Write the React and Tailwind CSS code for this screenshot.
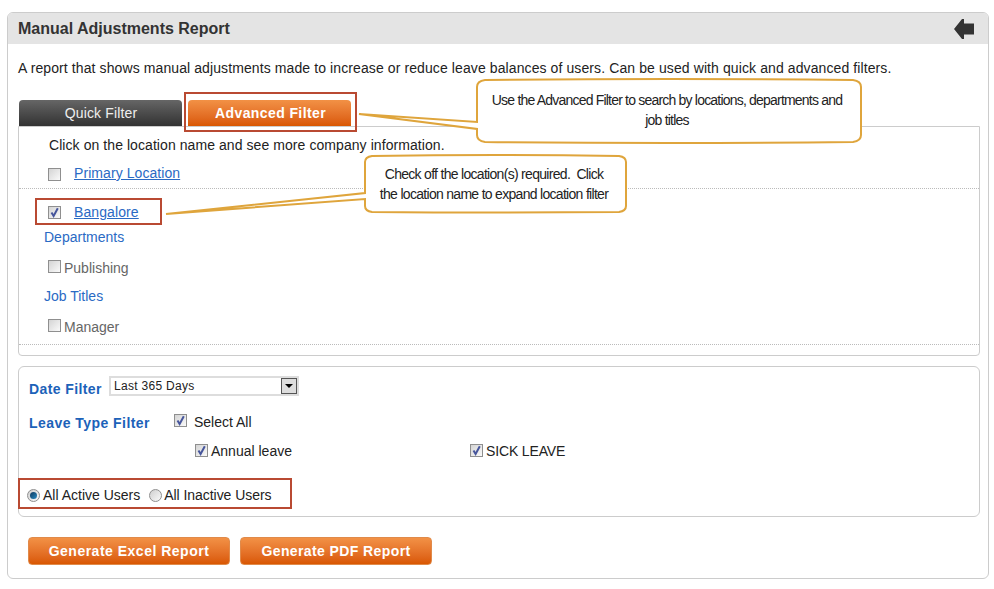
import React from "react";

const Check = ({ checked, className = "" }) => (
    <span className={`inline-flex shrink-0 w-[13px] h-[13px] items-center justify-center border border-[#8f8f8f] bg-gradient-to-br from-[#d4d4d4] to-[#fafafa] ${className}`}>
        {checked && (
            <svg width="11" height="11" viewBox="0 0 11 11">
                <path d="M2.5 5.5 L4.6 9 L8.8 1.2" fill="none" stroke="#47569c" strokeWidth="2" />
            </svg>
        )}
    </span>
);

const Radio = ({ checked }) => (
    <span className="inline-flex shrink-0 w-[13px] h-[13px] rounded-full items-center justify-center border border-[#8f8f8f] bg-gradient-to-br from-[#cfcfcf] to-[#fafafa]">
        {checked && <span className="w-[7px] h-[7px] rounded-full bg-gradient-to-br from-[#0f3a5e] to-[#2a8cc4]"></span>}
    </span>
);

const orange = "bg-gradient-to-b from-[#f29145] to-[#d95700]";

const Callouts = () => (
    <svg className="absolute left-0 top-0" width="994" height="589" viewBox="0 0 994 589">
        <path
            d="M485 80 Q669 78 853 80 Q861 81 861 87 L861 135 Q861 141 853 142 Q669 144 485 142 Q477 141 477 135 L477 129 L359 114 L477 122 L477 87 Q477 81 485 80 Z"
            fill="#fff"
            stroke="#dfa53c"
            strokeWidth="2"
        />
        <path
            d="M372 156 Q495 154 619 156 Q626 157 626 162 L626 206 Q626 211 619 212 Q495 213 372 212 Q365 211 365 206 L365 199 L166 214 L365 193 L365 162 Q365 157 372 156 Z"
            fill="#fff"
            stroke="#dfa53c"
            strokeWidth="2"
        />
    </svg>
);

export default function App() {
    return (
        <div className="relative w-[994px] h-[589px] bg-white overflow-hidden pt-3 pl-[7px] pr-[5px] font-['Liberation_Sans',Arial,sans-serif] text-[14px] text-[#222]">
            <div className="h-[567px] border border-[#ccc] rounded-md overflow-hidden">
                {/* Header */}
                <div className="h-[31px] bg-[#e4e4e4] flex items-center justify-between pl-[10px] pr-[14px]">
                    <h1 className="text-[16px] font-bold text-[#333]">Manual Adjustments Report</h1>
                    <svg width="20" height="20" viewBox="0 0 20 20">
                        <path d="M0 10 L8 0 L10 0 L10 4.5 L20 4.5 L20 15.5 L10 15.5 L10 20 L8 20 Z" fill="#333" />
                    </svg>
                </div>

                <div className="pl-[10px] pr-2">
                    <p className="mt-4 h-4 leading-4 tracking-[0.1px]">
                        A report that shows manual adjustments made to increase or reduce leave balances of users. Can be used with quick and advanced filters.
                    </p>

                    {/* Tabs */}
                    <div className="flex gap-[6px] mt-6 pl-px h-[26px]">
                        <div className="w-[163px] pl-px rounded-t bg-gradient-to-b from-[#666] to-[#333] text-[#eee] tracking-[0.15px] flex items-center justify-center">Quick Filter</div>
                        <div className={`w-[163px] pl-[2px] rounded-t ${orange} text-white font-bold tracking-[0.4px] flex items-center justify-center`}>Advanced Filter</div>
                    </div>

                    {/* Location panel */}
                    <div className="h-[230px] border border-[#ccc] rounded-b flex flex-col">
                        <p className="h-[18px] mt-[9px] pl-[30px] leading-[18px] tracking-[0.07px]">Click on the location name and see more company information.</p>
                        <div className="h-[28px] flex items-center pl-[29px] gap-[13px] mt-[5px]">
                            <Check className="mt-[2px]" />
                            <a className="text-[#2a6ac4] underline tracking-[0.07px]">Primary Location</a>
                        </div>
                        <div className="mt-px border-t border-dotted border-[#bbb]"></div>
                        <div className="h-[24px] flex items-center pl-[29px] gap-[13px] mt-[11px]">
                            <Check checked className="mt-px" />
                            <a className="text-[#2a6ac4] underline tracking-[0.1px]">Bangalore</a>
                        </div>
                        <div className="h-4 leading-4 pl-[25px] mt-[5px] text-[#2a6ac4]">Departments</div>
                        <div className="h-4 flex items-center pl-[29px] gap-[3px] mt-[15px] text-[#666]">
                            <Check className="-mt-[3px]" />
                            Publishing
                        </div>
                        <div className="h-4 leading-4 pl-[25px] mt-[12px] text-[#2a6ac4]">Job Titles</div>
                        <div className="h-4 flex items-center pl-[29px] gap-[3px] mt-[15px] text-[#666]">
                            <Check className="-mt-[3px]" />
                            Manager
                        </div>
                        <div className="mt-[9px] border-t border-dotted border-[#bbb]"></div>
                    </div>

                    {/* Date and leave filters */}
                    <div className="h-[151px] mt-[10px] border border-[#ccc] rounded-md flex flex-col">
                        <div className="flex items-center h-[20px] mt-[9px] pl-[10px]">
                            <span className="w-[80px] font-bold text-[#1c62b9] mt-[6px] tracking-[0.4px]">Date Filter</span>
                            <div className="w-[190px] h-[20px] border-2 border-[#ddd] flex items-center justify-between pl-[3px] text-[12px] tracking-[0.3px]">
                                Last 365 Days
                                <span className="w-[16px] h-[16px] border border-[#555] bg-[#ddd] flex items-center justify-center">
                                    <span className="border-x-[4px] border-x-transparent border-t-[4px] border-t-black"></span>
                                </span>
                            </div>
                        </div>
                        <div className="flex items-center h-[20px] mt-[16px] pl-[10px]">
                            <span className="w-[145px] mt-[2px] font-bold text-[#1c62b9] tracking-[0.45px]">Leave Type Filter</span>
                            <Check checked className="-mt-[3px]" />
                            <span className="ml-[7px]">Select All</span>
                        </div>
                        <div className="flex items-center h-[20px] mt-[9px] pl-[176px]">
                            <div className="w-[275px] flex items-center gap-[3px]">
                                <Check checked className="-mt-[2px]" />
                                Annual leave
                            </div>
                            <div className="flex items-center gap-[3px]">
                                <Check checked className="-mt-[2px]" />
                                <span className="tracking-[-0.15px]">SICK LEAVE</span>
                            </div>
                        </div>
                        <div className="flex items-center h-[20px] mt-[24px] pl-2 gap-[3px]">
                            <Radio checked />
                            <span className="mr-[6px]">All Active Users</span>
                            <Radio />
                            <span className="-ml-px tracking-[-0.05px]">All Inactive Users</span>
                        </div>
                    </div>

                    {/* Buttons */}
                    <div className="flex gap-[10px] mt-5 pl-[10px]">
                        <button className={`w-[202px] h-[28px] rounded border border-[#e08a4a] ${orange} text-white font-bold tracking-[0.5px]`}>Generate Excel Report</button>
                        <button className={`w-[192px] h-[28px] rounded border border-[#e08a4a] ${orange} text-white font-bold tracking-[0.4px]`}>Generate PDF Report</button>
                    </div>
                </div>
            </div>

            {/* Annotation overlays */}
            <div className="absolute left-[184px] top-[92px] w-[173px] h-[40px] border-2 border-[#b94a32]"></div>
            <div className="absolute left-[35px] top-[198px] w-[127px] h-[27px] border-2 border-[#b94a32]"></div>
            <div className="absolute left-[18px] top-[478px] w-[274px] h-[31px] border-2 border-[#b94a32]"></div>
            <Callouts />
            <div className="absolute left-[480px] top-[90px] w-[374px] text-center leading-[20px] tracking-[-0.8px]">
                Use the Advanced Filter to search by locations, departments and
                <br />
                job titles
            </div>
            <div className="absolute left-[368px] top-[164px] w-[252px] text-center leading-[20px] tracking-[-0.7px]">
                Check off the location(s) required.&nbsp; Click
                <br />
                the location name to expand location filter
            </div>
        </div>
    );
}
